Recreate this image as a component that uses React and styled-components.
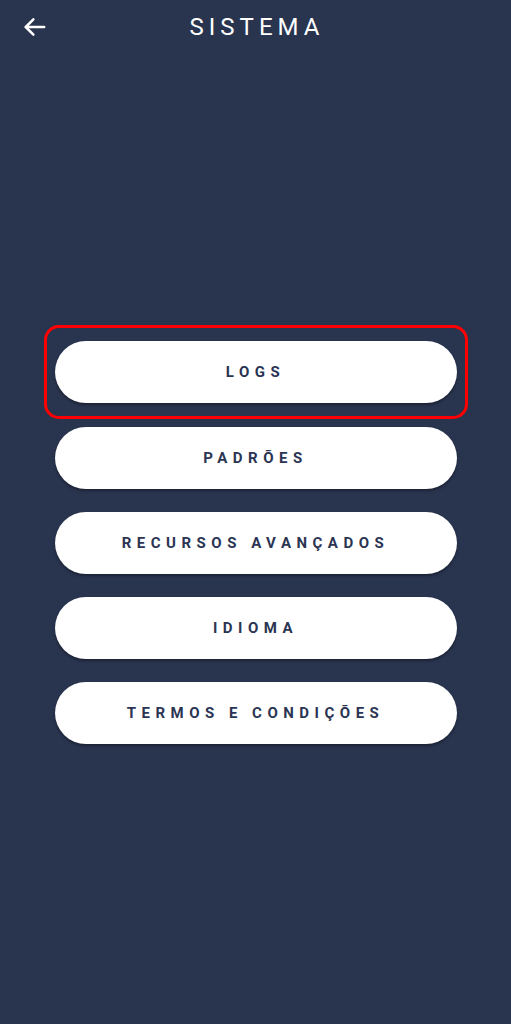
import styled, { createGlobalStyle } from 'styled-components'

const Global = createGlobalStyle`
  html, body {
    margin: 0;
    padding: 0;
    background: #29344f;
  }
  * {
    box-sizing: border-box;
  }
`

const Screen = styled.div`
  width: 511px;
  height: 1024px;
  background: #29344f;
  font-family: Roboto, 'Liberation Sans', sans-serif;
  display: flex;
  flex-direction: column;
`

const Header = styled.header`
  height: 54px;
  display: grid;
  grid-template-columns: 70px 1fr 70px;
  align-items: center;
`

const BackButton = styled.button`
  background: none;
  border: none;
  padding: 0 0 0 22px;
  height: 100%;
  display: flex;
  align-items: center;
  cursor: pointer;
  color: #ffffff;
`

const Title = styled.h1`
  margin: 0;
  text-align: center;
  color: #ffffff;
  font-size: 24px;
  font-weight: 400;
  letter-spacing: 5px;
  padding-left: 3px;
`

const Menu = styled.nav`
  margin-top: 287px;
  display: flex;
  flex-direction: column;
  gap: 23px;
  padding: 0 54px 0 55px;
`

const Highlight = styled.div`
  margin: -16px -11px -15px;
  padding: 13px 8px;
  border: 3px solid #ff0000;
  border-radius: 15px;
`

const Item = styled.button`
  width: 100%;
  height: 62px;
  border: none;
  border-radius: 31px;
  background: #ffffff;
  box-shadow: 0 2px 3px rgba(0, 0, 0, 0.35);
  color: #2b3553;
  font-family: Roboto, 'Liberation Sans', sans-serif;
  font-size: 15px;
  font-weight: 700;
  letter-spacing: 5.5px;
  padding-left: 5px;
  cursor: pointer;
`

const items = ['PADRÕES', 'RECURSOS AVANÇADOS', 'IDIOMA', 'TERMOS E CONDIÇÕES']

function App() {
  return (
    <Screen>
      <Global />
      <Header>
        <BackButton aria-label="Voltar">
          <svg width="26" height="26" viewBox="0 0 24 24" fill="none" stroke="currentColor" strokeWidth="2.3" strokeLinecap="round" strokeLinejoin="round">
            <path d="M20.5 12H3.5" />
            <path d="M10.5 5l-7 7 7 7" />
          </svg>
        </BackButton>
        <Title>SISTEMA</Title>
        <span />
      </Header>
      <Menu>
        <Highlight>
          <Item>LOGS</Item>
        </Highlight>
        {items.map((label) => (
          <Item key={label}>{label}</Item>
        ))}
      </Menu>
    </Screen>
  )
}

export default App
